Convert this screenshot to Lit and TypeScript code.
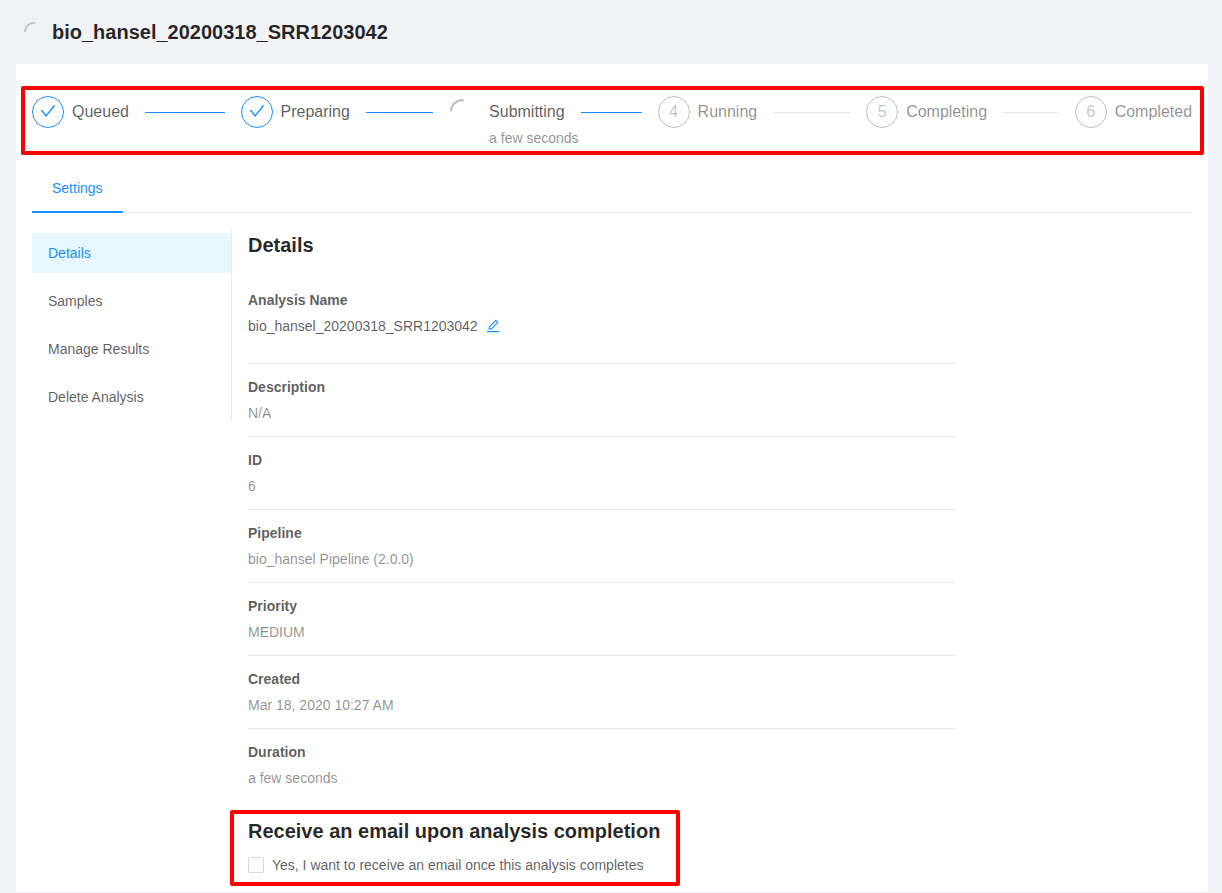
import { LitElement, html, css, svg, nothing } from "lit";
import { customElement, property } from "lit/decorators.js";
import { classMap } from "lit/directives/class-map.js";

type StepStatus = "finish" | "process" | "wait";

interface Step {
  title: string;
  status: StepStatus;
  description?: string;
}

const STEPS: Step[] = [
  { title: "Queued", status: "finish" },
  { title: "Preparing", status: "finish" },
  { title: "Submitting", status: "process", description: "a few seconds" },
  { title: "Running", status: "wait" },
  { title: "Completing", status: "wait" },
  { title: "Completed", status: "wait" },
];

const MENU = ["Details", "Samples", "Manage Results", "Delete Analysis"];

const FIELDS: { label: string; value: string; editable?: boolean }[] = [
  { label: "Analysis Name", value: "bio_hansel_20200318_SRR1203042", editable: true },
  { label: "Description", value: "N/A" },
  { label: "ID", value: "6" },
  { label: "Pipeline", value: "bio_hansel Pipeline (2.0.0)" },
  { label: "Priority", value: "MEDIUM" },
  { label: "Created", value: "Mar 18, 2020 10:27 AM" },
  { label: "Duration", value: "a few seconds" },
];

const spinner = (size: number) => html`
  <svg width=${size} height=${size} viewBox="0 0 1024 1024" fill="none">
    ${svg`<path d="M52 484A462 462 0 0 1 548 51" stroke="currentColor" stroke-width="92" stroke-linecap="round"/>`}
  </svg>
`;

const checkIcon = html`
  <svg width="16" height="16" viewBox="64 64 896 896" fill="currentColor">
    <path d="M912 190h-69.9c-9.8 0-19.1 4.5-25.1 12.2L404.7 724.5 207 474a32 32 0 00-25.1-12.2H112c-6.7 0-10.4 7.7-6.3 12.9l273.9 347c12.8 16.2 37.4 16.2 50.3 0l488.4-618.9c4.1-5.1.4-12.8-6.3-12.8z" />
  </svg>
`;

const editIcon = html`
  <svg width="14" height="14" viewBox="64 64 896 896" fill="currentColor">
    <path d="M257.7 752c2 0 4-.2 6-.5L431.9 722c2-.4 3.9-1.3 5.3-2.8l423.9-423.9a9.96 9.96 0 000-14.1L694.9 114.9c-1.9-1.9-4.4-2.9-7.1-2.9s-5.2 1-7.1 2.9L256.8 538.8c-1.5 1.5-2.4 3.3-2.8 5.3l-29.5 168.2a33.5 33.5 0 009.4 29.8c6.6 6.4 14.9 9.9 23.8 9.9zm67.4-174.4L687.8 215l73.3 73.3-362.7 362.6-88.9 15.7 15.6-89zM880 836H144c-17.7 0-32 14.3-32 32v36c0 4.4 3.6 8 8 8h784c4.4 0 8-3.6 8-8v-36c0-17.7-14.3-32-32-32z" />
  </svg>
`;

@customElement("analysis-steps")
export class AnalysisSteps extends LitElement {
  @property({ attribute: false }) steps: Step[] = [];

  static styles = css`
    :host {
      display: flex;
      font-size: 14px;
    }
    .step {
      display: flex;
      align-items: flex-start;
      flex: 1;
      min-width: 0;
      margin-right: 16px;
    }
    .step:last-child {
      flex: none;
      margin-right: 0;
    }
    .icon {
      box-sizing: border-box;
      flex: none;
      display: flex;
      align-items: center;
      justify-content: center;
      width: 32px;
      height: 32px;
      margin-right: 8px;
      border: 1px solid rgba(0, 0, 0, 0.25);
      border-radius: 32px;
      font-size: 16px;
      line-height: 1;
      color: rgba(0, 0, 0, 0.25);
    }
    .finish .icon {
      border-color: #1890ff;
      color: #1890ff;
    }
    .check {
      display: flex;
      margin-top: -2px;
    }
    .num {
      margin-top: -1px;
    }
    .process .icon {
      border: none;
      justify-content: flex-start;
      align-items: flex-start;
      padding: 3px 0 0 1px;
    }
    .content {
      flex: 1;
      min-width: 0;
    }
    .row {
      display: flex;
      gap: 16px;
      height: 32px;
    }
    .title {
      font-size: 16px;
      line-height: 32px;
      color: rgba(0, 0, 0, 0.65);
      white-space: nowrap;
    }
    .wait .title {
      color: rgba(0, 0, 0, 0.45);
    }
    .line {
      flex: 1;
      height: 1px;
      margin-top: 16px;
      background: #1890ff;
    }
    .wait .line {
      background: #e8e8e8;
    }
    .desc {
      line-height: 22px;
      margin-top: -1px;
      color: rgba(0, 0, 0, 0.45);
    }
  `;

  render() {
    return this.steps.map(
      (s, i) => html`
        <div class=${classMap({ step: true, [s.status]: true })}>
          <div class="icon">
            ${s.status === "finish"
              ? html`<span class="check">${checkIcon}</span>`
              : s.status === "process"
                ? spinner(24)
                : html`<span class="num">${i + 1}</span>`}
          </div>
          <div class="content">
            <div class="row">
              <div class="title">${s.title}</div>
              ${i < this.steps.length - 1 ? html`<div class="line"></div>` : nothing}
            </div>
            ${s.description ? html`<div class="desc">${s.description}</div>` : nothing}
          </div>
        </div>
      `
    );
  }
}

@customElement("app-root")
export class AppRoot extends LitElement {
  static styles = css`
    :host {
      display: block;
      box-sizing: border-box;
      height: 893px;
      overflow: hidden;
      padding: 0 14px 0 16px;
      background: #f0f2f5;
      font-family: "Liberation Sans", Arial, sans-serif;
      font-size: 14px;
      line-height: 22px;
      color: rgba(0, 0, 0, 0.65);
    }
    .header {
      display: flex;
      align-items: center;
      gap: 8px;
      height: 64px;
      padding-left: 8px;
      color: rgba(0, 0, 0, 0.2);
    }
    .header svg {
      display: block;
    }
    h1,
    h2 {
      margin: 0;
      font-size: 20px;
      line-height: 28px;
      font-weight: 700;
      color: rgba(0, 0, 0, 0.85);
    }
    .card {
      box-sizing: border-box;
      height: 828px;
      padding: 32px 16px 0;
      background: #fff;
    }
    .steps {
      position: relative;
      height: 68px;
    }
    .frame {
      position: absolute;
      box-sizing: border-box;
      border: 4px solid #f00;
      border-radius: 2px;
    }
    .frame-steps {
      inset: -10px -12px 9px -11px;
    }
    .frame-email {
      top: -7px;
      left: -18px;
      width: 450px;
      height: 76px;
    }
    .tabs {
      display: flex;
      box-sizing: border-box;
      height: 49px;
      border-bottom: 1px solid #e8e8e8;
    }
    .tab {
      box-sizing: border-box;
      height: 49px;
      padding: 13px 20px 0;
      border-bottom: 2px solid #1890ff;
      color: #1890ff;
    }
    .body {
      display: flex;
      padding-top: 16px;
    }
    .menu {
      box-sizing: border-box;
      width: 200px;
      height: 192px;
      flex: none;
      border-right: 1px solid #e8e8e8;
    }
    .item {
      margin: 4px 0 8px;
      padding-left: 16px;
      height: 40px;
      line-height: 40px;
    }
    .item.selected {
      background: #e6f7ff;
      color: #1890ff;
    }
    .content {
      width: 708px;
      margin-left: 16px;
      padding-top: 2px;
    }
    .list {
      padding-top: 18px;
    }
    .field {
      display: grid;
      row-gap: 4px;
      padding: 12px 0;
      border-bottom: 1px solid #e8e8e8;
    }
    .field:last-child {
      border-bottom: none;
    }
    .label {
      font-weight: 700;
    }
    .value {
      color: rgba(0, 0, 0, 0.45);
    }
    .value.editable {
      display: flex;
      align-items: center;
      gap: 8px;
      margin-bottom: 14px;
      color: rgba(0, 0, 0, 0.65);
    }
    .edit {
      display: flex;
      color: #1890ff;
    }
    .email {
      position: relative;
      margin-top: 16px;
    }
    .option {
      display: flex;
      align-items: center;
      gap: 8px;
      margin-top: 9px;
    }
    .box {
      box-sizing: border-box;
      width: 16px;
      height: 16px;
      border: 1px solid #d9d9d9;
      border-radius: 2px;
      background: #fff;
    }
  `;

  render() {
    return html`
      <div class="header">
        ${spinner(20)}
        <h1>bio_hansel_20200318_SRR1203042</h1>
      </div>
      <div class="card">
        <div class="steps">
          <analysis-steps .steps=${STEPS}></analysis-steps>
          <div class="frame frame-steps"></div>
        </div>
        <div class="tabs"><div class="tab">Settings</div></div>
        <div class="body">
          <div class="menu">
            ${MENU.map(
              (m, i) => html`<div class=${classMap({ item: true, selected: i === 0 })}>${m}</div>`
            )}
          </div>
          <div class="content">
            <h2>Details</h2>
            <div class="list">
              ${FIELDS.map(
                (f) => html`
                  <div class="field">
                    <div class="label">${f.label}</div>
                    <div class=${classMap({ value: true, editable: !!f.editable })}>
                      <span>${f.value}</span>
                      ${f.editable ? html`<span class="edit">${editIcon}</span>` : nothing}
                    </div>
                  </div>
                `
              )}
            </div>
            <div class="email">
              <h2>Receive an email upon analysis completion</h2>
              <div class="option">
                <span class="box"></span>
                <span>Yes, I want to receive an email once this analysis completes</span>
              </div>
              <div class="frame frame-email"></div>
            </div>
          </div>
        </div>
      </div>
    `;
  }
}
